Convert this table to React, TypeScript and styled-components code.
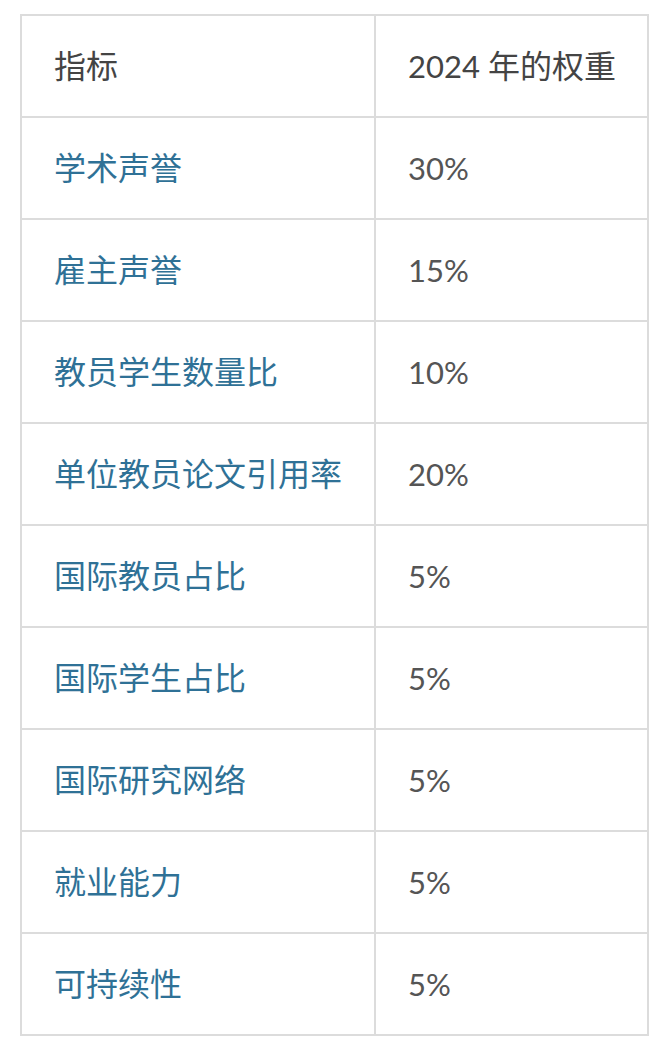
import React from "react";
import styled, { createGlobalStyle } from "styled-components";

const Global = createGlobalStyle`
  html, body { margin: 0; padding: 0; background: #ffffff; }
  body { font-family: "Lato", "Noto Sans CJK SC", sans-serif; }
`;

const Page = styled.div`
  padding: 14px 0 0 20px;
  width: 652px;
  box-sizing: border-box;
`;

const Table = styled.table`
  border-collapse: collapse;
  table-layout: fixed;
  width: 629px;
  font-family: "Lato", "Noto Sans CJK SC", sans-serif;
  font-size: 32px;
  line-height: 1.2;
`;

const Row = styled.tr`
  height: 102px;
`;

const Cell = styled.td<{ $head?: boolean; $link?: boolean; $w?: number }>`
  border: 2px solid #dcdcdc;
  padding: 0 0 0 32px;
  box-sizing: border-box;
  vertical-align: middle;
  text-align: left;
  white-space: nowrap;
  overflow: hidden;
  width: ${(p) => (p.$w ? `${p.$w}px` : "auto")};
  color: ${(p) => (p.$link ? "#2f7196" : p.$head ? "#444444" : "#555555")};
  font-weight: 400;
`;

const Num = styled.span`
  font-size: 31px;
`;

const Link = styled.a`
  color: inherit;
  text-decoration: none;
`;

const rows: [string, string][] = [
  ["学术声誉", "30%"],
  ["雇主声誉", "15%"],
  ["教员学生数量比", "10%"],
  ["单位教员论文引用率", "20%"],
  ["国际教员占比", "5%"],
  ["国际学生占比", "5%"],
  ["国际研究网络", "5%"],
  ["就业能力", "5%"],
  ["可持续性", "5%"],
];

export default function App() {
  return (
    <Page>
      <Global />
      <Table>
        <tbody>
          <Row>
            <Cell $head $w={354}>指标</Cell>
            <Cell $head>
              <Num>2024</Num> 年的权重
            </Cell>
          </Row>
          {rows.map(([k, v]) => (
            <Row key={k}>
              <Cell $link>
                <Link href="#">{k}</Link>
              </Cell>
              <Cell>
                <Num>{v}</Num>
              </Cell>
            </Row>
          ))}
        </tbody>
      </Table>
    </Page>
  );
}
